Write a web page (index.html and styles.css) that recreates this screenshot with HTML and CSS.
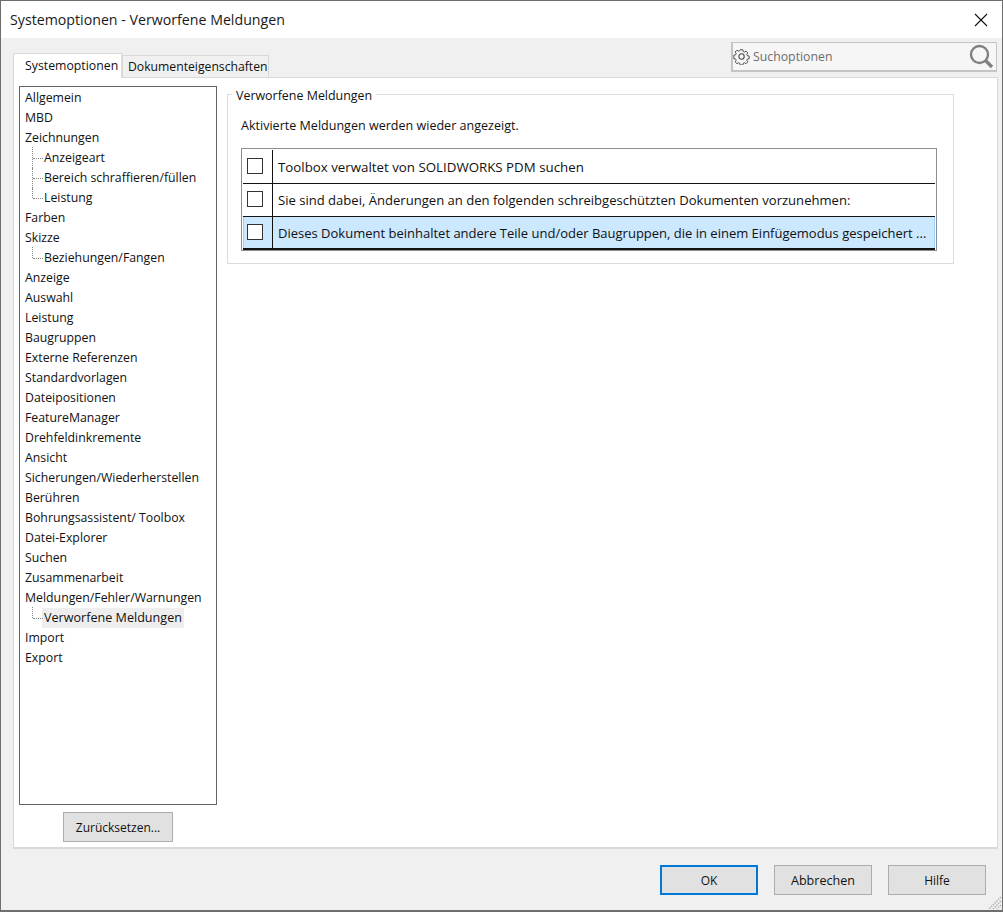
FILE: index.html
```html
<!DOCTYPE html>
<html lang="de">
<head>
<meta charset="utf-8">
<title>Systemoptionen - Verworfene Meldungen</title>
<link rel="stylesheet" href="styles.css">
</head>
<body>
<div class="window">
  <header class="titlebar">
    <h1 class="title">Systemoptionen - Verworfene Meldungen</h1>
    <svg class="close" width="14" height="14" viewBox="0 0 14 14"><path d="M1 1l12 12M13 1L1 13" stroke="#111" stroke-width="1.1" fill="none"/></svg>
  </header>
  <div class="body">
    <div class="tabrow">
      <div class="tabs">
        <div class="tab active">Systemoptionen</div>
        <div class="tab">Dokumenteigenschaften</div>
      </div>
      <div class="search">
        <svg class="gear" width="17" height="17" viewBox="0 0 17 17" fill="none" stroke="#444" stroke-width="1.050"><path d="M7 1h3l.4 2 1.4.6 1.7-1.1 2 2-1.1 1.7.6 1.4 2 .4v3l-2 .4-.6 1.4 1.1 1.7-2 2-1.7-1.1-1.4.6-.4 2H7l-.4-2-1.4-.6-1.7 1.1-2-2 1.1-1.7-.6-1.4-2-.4V7l2-.4.6-1.4L1.500 3.500l2-2 1.700 1.100 1.400-.6z" transform="translate(.85 .85) scale(.9)"/><circle cx="8.500" cy="8.500" r="2.700"/></svg>
        <span class="search-text">Suchoptionen</span>
        <svg class="lens" width="25" height="25" viewBox="0 0 25 25" fill="none" stroke="#808080"><circle cx="10.500" cy="10.500" r="8.500" stroke-width="2.400"/><path d="M16.500 16.500l6.500 6.500" stroke-width="3.400"/></svg>
      </div>
    </div>
    <main class="panel">
      <div class="sidebar">
        <ul class="tree">
          <li>Allgemein</li>
          <li>MBD</li>
          <li>Zeichnungen</li>
          <li class="child first">Anzeigeart</li>
          <li class="child">Bereich schraffieren/füllen</li>
          <li class="child last">Leistung</li>
          <li>Farben</li>
          <li>Skizze</li>
          <li class="child first last">Beziehungen/Fangen</li>
          <li>Anzeige</li>
          <li>Auswahl</li>
          <li>Leistung</li>
          <li>Baugruppen</li>
          <li>Externe Referenzen</li>
          <li>Standardvorlagen</li>
          <li>Dateipositionen</li>
          <li>FeatureManager</li>
          <li>Drehfeldinkremente</li>
          <li>Ansicht</li>
          <li>Sicherungen/Wiederherstellen</li>
          <li>Berühren</li>
          <li>Bohrungsassistent/ Toolbox</li>
          <li>Datei-Explorer</li>
          <li>Suchen</li>
          <li>Zusammenarbeit</li>
          <li>Meldungen/Fehler/Warnungen</li>
          <li class="child first last"><span class="selected">Verworfene Meldungen</span></li>
          <li>Import</li>
          <li>Export</li>
        </ul>
        <button class="btn reset">Zurücksetzen...</button>
      </div>
      <section class="content">
        <div class="group">
          <div class="legend">Verworfene Meldungen</div>
          <p class="hint">Aktivierte Meldungen werden wieder angezeigt.</p>
          <div class="table">
            <div class="row tall"><div class="check"><span class="box"></span></div><div class="cell">Toolbox verwaltet von SOLIDWORKS PDM suchen</div></div>
            <div class="row mid"><div class="check"><span class="box"></span></div><div class="cell">Sie sind dabei, Änderungen an den folgenden schreibgeschützten Dokumenten vorzunehmen:</div></div>
            <div class="row sel"><div class="check"><span class="box"></span></div><div class="cell">Dieses Dokument beinhaltet andere Teile und/oder Baugruppen, die in einem Einfügemodus gespeichert ...</div></div>
          </div>
        </div>
      </section>
    </main>
    <footer class="footer">
      <button class="btn primary">OK</button>
      <button class="btn wide-text">Abbrechen</button>
      <button class="btn">Hilfe</button>
    </footer>
    <svg class="grip" width="14" height="14" viewBox="0 0 14 14" stroke="#b4b4b4" stroke-width="1.500" stroke-dasharray="1.500 1"><path d="M13 1L1 13M13 5l-8 8M13 9l-4 4"/></svg>
  </div>
</div>
</body>
</html>
```
FILE: styles.css
```css
* { box-sizing: border-box; }
html, body { margin: 0; padding: 0; }
body {
  width: 1003px;
  height: 912px;
  overflow: hidden;
  font-family: "Open Sans", "Noto Sans", sans-serif;
  font-size: 12px;
  color: #111;
}
.window {
  width: 1003px;
  height: 912px;
  display: flex;
  flex-direction: column;
  border: 1px solid #6e6e6e;
  border-bottom-width: 2px;
  background: #f0f0f0;
}
.titlebar {
  height: 37px;
  flex: none;
  background: #fff;
  display: flex;
  align-items: center;
  justify-content: space-between;
  padding: 0 14px 0 9px;
}
.title {
  margin: 0;
  font-size: 14.2px;
  font-weight: 400;
  color: #1a1a1a;
}
.body {
  position: relative;
  flex: 1;
  display: flex;
  flex-direction: column;
  padding: 4px 4px 0 12px;
}
.tabrow {
  height: 35px;
  flex: none;
  display: flex;
  justify-content: space-between;
  align-items: flex-start;
}
.tabs {
  display: flex;
  align-items: flex-end;
  height: 36px;
  position: relative;
  z-index: 1;
}
.tab {
  height: 23px;
  width: 147px;
  padding: 0 0 0 5px;
  display: flex;
  align-items: center;
  font-size: 12.2px;
  border: 1px solid #d9d9d9;
  background: #f0f0f0;
}
.tab.active {
  height: 25px;
  width: 109px;
  background: #fff;
  border-bottom: 0;
  padding: 0 0 1px 11px;
  font-size: 12.3px;
}
.search {
  width: 266px;
  height: 30px;
  margin-right: 1px;
  display: flex;
  align-items: center;
  gap: 3px;
  padding: 0 2px 0 0;
  background: #f6f6f6;
  border: 1px solid #c4c4c4;
  border-bottom-width: 2px;
  border-left-width: 2px;
}
.gear { flex: none; }
.search-text { flex: 1; color: #6d6d6d; font-size: 12.3px; }
.lens { flex: none; }
.panel {
  flex: 1;
  min-height: 0;
  display: flex;
  gap: 10px;
  background: #fff;
  border: 1px solid #d9d9d9;
  border-bottom-width: 2px;
  padding: 8px 43px 5px 5px;
}
.sidebar {
  width: 198px;
  flex: none;
  display: flex;
  flex-direction: column;
  align-items: center;
  gap: 7px;
}
.tree {
  flex: 1;
  width: 100%;
  margin: 0;
  padding: 1px 0 0 5px;
  list-style: none;
  border: 1px solid #646464;
  font-size: 12.3px;
}
.tree li {
  position: relative;
  height: 20px;
  line-height: 20px;
  white-space: nowrap;
}
.child { padding-left: 19px; }
.child::before {
  content: "";
  position: absolute;
  left: 7px;
  top: 0;
  bottom: 0;
  border-left: 1px dotted #888;
}
.child.first::before { top: -1px; }
.child.last::before { bottom: 10px; }
.child::after {
  content: "";
  position: absolute;
  left: 8px;
  width: 10px;
  top: 10px;
  border-top: 1px dotted #888;
}
.selected {
  display: inline-block;
  margin-left: -2px;
  padding: 0 2px;
  background: #eeeeee;
  font-size: 12.6px;
}
.btn {
  font: inherit;
  color: #111;
  width: 98px;
  height: 30px;
  padding: 0;
  background: #e1e1e1;
  border: 1px solid #adadad;
}
.wide-text { font-size: 12.6px; }
.reset { width: 110px; flex: none; }
.content { flex: 1; min-width: 0; }
.group {
  position: relative;
  height: 170px;
  border: 1px solid #dcdcdc;
  padding: 0 13px;
  margin-top: 8px;
}
.legend {
  position: absolute;
  top: -8px;
  left: 4px;
  padding: 0 4px;
  height: 18px;
  line-height: 18px;
  background: #fff;
  font-size: 12.45px;
}
.hint {
  margin: 0;
  padding-top: 22px;
  height: 53px;
  line-height: 18px;
  font-size: 12.55px;
}
.table {
  width: 696px;
  height: 103px;
  border: 1px solid #8a8f97;
  padding: 1px 1px 0;
  display: flex;
  flex-direction: column;
  font-size: 13px;
}
.row {
  flex: none;
  height: 33px;
  display: flex;
  border-bottom: 1px solid #111;
}
.row.tall { height: 34px; font-size: 13.3px; }
.row.mid { font-size: 13.07px; }
.row.sel {
  background: #cce8ff;
  border-bottom-width: 2px;
  box-shadow: inset 1px 0 0 #99d1ff, inset -1px 0 0 #99d1ff;
}
.check {
  width: 30px;
  flex: none;
  display: flex;
  align-items: center;
  padding-left: 4px;
  border-right: 1px solid #111;
}
.box {
  width: 16px;
  height: 16px;
  background: #fff;
  border: 1px solid #333;
  margin-top: -2px;
}
.cell {
  flex: 1;
  display: flex;
  align-items: center;
  padding-left: 5px;
  white-space: nowrap;
  overflow: hidden;
}
.footer {
  height: 61px;
  flex: none;
  display: flex;
  justify-content: flex-end;
  gap: 16px;
  padding: 16px 12px 0 0;
}
.primary { border: 2px solid #0078d7; }
.grip { position: absolute; right: 0; bottom: 0; }
```
